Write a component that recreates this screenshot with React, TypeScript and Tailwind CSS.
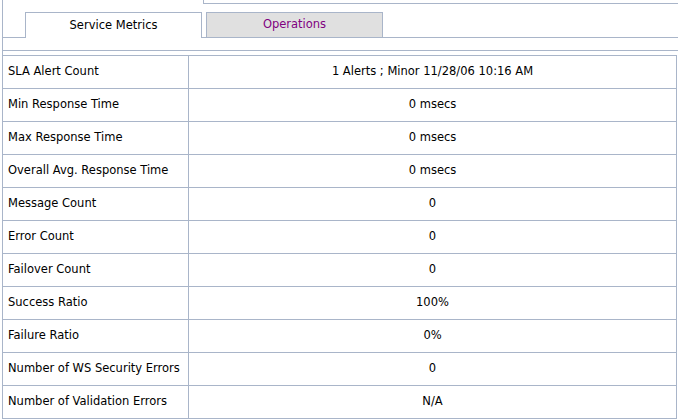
const rows: [string, string][] = [
  ["SLA Alert Count", "1 Alerts ; Minor 11/28/06 10:16 AM"],
  ["Min Response Time", "0 msecs"],
  ["Max Response Time", "0 msecs"],
  ["Overall Avg. Response Time", "0 msecs"],
  ["Message Count", "0"],
  ["Error Count", "0"],
  ["Failover Count", "0"],
  ["Success Ratio", "100%"],
  ["Failure Ratio", "0%"],
  ["Number of WS Security Errors", "0"],
  ["Number of Validation Errors", "N/A"],
];

export default function App() {
  return (
    <div className="w-[678px] h-[419px] overflow-hidden bg-white text-[11.5px] text-black" style={{ fontFamily: '"DejaVu Sans", Verdana, sans-serif' }}>
      <div className="ml-[2px] border-l border-[#a9b5c9] h-full flex flex-col">
        <div className="flex h-[4px]">
          <div className="w-[201px] border-r border-[#a9b5c9]" />
          <div className="flex-1 border-b border-[#a9b5c9]" />
        </div>
        <div className="flex items-end h-[35px]">
          <div className="w-[22px] border-b border-[#a9b5c9]" />
          <div className="w-[177px] h-[26px] border border-b-0 border-[#a9b5c9] bg-white flex items-center justify-center pt-[1px]">Service Metrics</div>
          <div className="w-[4px] border-b border-[#a9b5c9]" />
          <div className="w-[177px] h-[26px] border border-[#a9b5c9] bg-[#e0e0e0] flex items-center justify-center text-[#800080]">Operations</div>
          <div className="flex-1 border-b border-[#a9b5c9]" />
        </div>
        <div className="h-[14px] border-b border-[#a9b5c9]" />
        <div className="h-[4px]" />
        <div className="w-[674px] border-t border-r border-[#a9b5c9]">
          {rows.map(([k, v]) => (
            <div key={k} className="flex h-[33px] border-b border-[#a9b5c9]">
              <div className="w-[186px] border-r border-[#a9b5c9] flex items-center pl-[5px]">{k}</div>
              <div className="flex-1 flex items-center justify-center">{v}</div>
            </div>
          ))}
        </div>
      </div>
    </div>
  );
}
